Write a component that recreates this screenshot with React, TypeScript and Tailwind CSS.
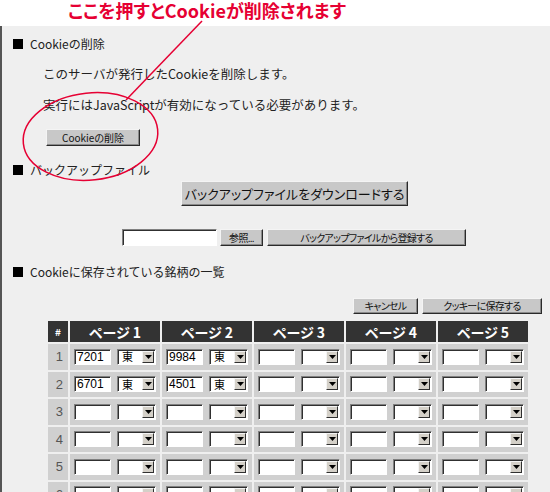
import React from "react";

function Btn({ children, className }: { children: React.ReactNode; className: string }) {
  return (
    <div
      className={`flex items-center justify-center bg-[#c8c8c8] border border-t-[#f4f4f4] border-l-[#f4f4f4] border-r-[#2a2a2a] border-b-[#2a2a2a] shadow-[inset_-1px_-1px_0_#8a8a8a] text-[#111] [font-feature-settings:'palt'] leading-none whitespace-nowrap ${className}`}
    >
      {children}
    </div>
  );
}

function Field({ value, className }: { value?: string; className: string }) {
  return (
    <div
      className={`flex items-center bg-white border border-t-[#808080] border-l-[#808080] border-b-white border-r-white shadow-[inset_1px_1px_0_#303030] font-['Liberation_Sans',sans-serif] text-[12px] leading-none text-black pl-[2px] ${className}`}
    >
      {value}
    </div>
  );
}

function Sel({ value }: { value?: string }) {
  return (
    <div className="flex items-stretch w-[39px] h-[16px] bg-white border border-t-[#808080] border-l-[#808080] border-b-white border-r-white shadow-[inset_1px_1px_0_#303030]">
      <div className="flex-1 flex items-center pl-[4px] text-[11px] leading-none text-black">{value}</div>
      <div className="w-[12px] mt-[1px] mb-[1px] mr-[1px] flex items-center justify-center bg-[#d4d0c8] border border-t-[#f4f4f4] border-l-[#f4f4f4] border-r-[#303030] border-b-[#303030]">
        <svg width="7" height="4" viewBox="0 0 7 4">
          <path d="M0 0H7L3.5 4Z" fill="#000" />
        </svg>
      </div>
    </div>
  );
}

function Head({ children }: { children: React.ReactNode }) {
  return (
    <div className="flex items-center h-[16px] ml-[11px] gap-[7px] text-[12px] leading-none text-[#222]">
      <span className="inline-block w-[10px] h-[10px] bg-black" />
      <span>{children}</span>
    </div>
  );
}

const rows: { n: number; v: (string | undefined)[]; s: (string | undefined)[] }[] = [
  { n: 1, v: ["7201", "9984"], s: ["東", "東"] },
  { n: 2, v: ["6701", "4501"], s: ["東", "東"] },
  { n: 3, v: [], s: [] },
  { n: 4, v: [], s: [] },
  { n: 5, v: [], s: [] },
  { n: 6, v: [], s: [] },
];

export default function App() {
  return (
    <div className="relative w-[550px] h-[492px] overflow-hidden bg-white font-['Noto_Sans_CJK_JP',sans-serif]">
      <div className="h-[26px] pl-[68px] flex items-start">
        <div className="text-[18px] leading-[20px] font-bold text-[#e60033] [font-feature-settings:'palt']">
          ここを押すとCookieが削除されます
        </div>
      </div>
      <div className="h-[466px] bg-[#efefef] border-l-2 border-[#555] flex flex-col *:shrink-0">
        <div className="mt-[10px]">
          <Head>Cookieの削除</Head>
        </div>
        <div className="mt-[14px] ml-[41px] h-[16px] flex items-center text-[12.5px] leading-none text-[#222]">
          このサーバが発行したCookieを削除します。
        </div>
        <div className="mt-[15px] ml-[41px] h-[16px] flex items-center text-[12.5px] leading-none text-[#222]">
          実行にはJavaScriptが有効になっている必要があります。
        </div>
        <div className="mt-[16px] ml-[44px]">
          <Btn className="w-[94px] h-[17px] text-[10px]">Cookieの削除</Btn>
        </div>
        <div className="mt-[16px]">
          <Head>バックアップファイル</Head>
        </div>
        <div className="mt-[3px] ml-[179px]">
          <Btn className="w-[227px] h-[25px] text-[13px]">バックアップファイルをダウンロードする</Btn>
        </div>
        <div className="mt-[23px] ml-[120px] flex items-center">
          <Field className="w-[95px] h-[17px]" />
          <Btn className="ml-[3px] w-[43px] h-[17px] text-[10px] tracking-[-0.7px]">参照...</Btn>
          <Btn className="ml-[4px] w-[199px] h-[17px] text-[10px] tracking-[-0.7px]">バックアップファイルから登録する</Btn>
        </div>
        <div className="mt-[18px]">
          <Head>Cookieに保存されている銘柄の一覧</Head>
        </div>
        <div className="mt-[18px] ml-[351px] flex">
          <Btn className="w-[65px] h-[16px] text-[10px] tracking-[-0.7px]">キャンセル</Btn>
          <Btn className="ml-[4px] w-[120px] h-[16px] text-[10px] tracking-[-0.7px]">クッキーに保存する</Btn>
        </div>
        <div className="mt-[7px] ml-[46px] grid grid-cols-[20px_repeat(5,90px)] grid-rows-[21px_repeat(6,25.5px)] gap-x-[2px] gap-y-[2px]">
          <div className="bg-[#333] flex items-center justify-center text-white text-[10px] font-bold leading-none">#</div>
          {[1, 2, 3, 4, 5].map((p) => (
            <div
              key={p}
              className="bg-[#333] flex items-center justify-center text-white text-[14px] font-bold leading-none [font-feature-settings:'palt']"
            >
              ページ {p}
            </div>
          ))}
          {rows.map((r) => (
            <React.Fragment key={r.n}>
              <div className="bg-[#d0d0d0] flex items-center justify-end pr-[5px] text-[13px] leading-none text-[#555] font-['Liberation_Sans',sans-serif]">
                {r.n}
              </div>
              {[0, 1, 2, 3, 4].map((c) => (
                <div key={c} className="bg-[#d0d0d0] flex items-center px-[4px] gap-[6px]">
                  <Field className="w-[37px] h-[16px]" value={r.v[c]} />
                  <Sel value={r.s[c]} />
                </div>
              ))}
            </React.Fragment>
          ))}
        </div>
      </div>
      <svg className="absolute left-0 top-0 pointer-events-none" width="550" height="492" viewBox="0 0 550 492">
        <ellipse cx="90.5" cy="136.5" rx="67.5" ry="43.5" transform="rotate(-6 90.5 136.5)" fill="none" stroke="#e60033" strokeWidth="1.5" />
        <line x1="202" y1="21" x2="126" y2="100" stroke="#e60033" strokeWidth="1.5" />
      </svg>
    </div>
  );
}
